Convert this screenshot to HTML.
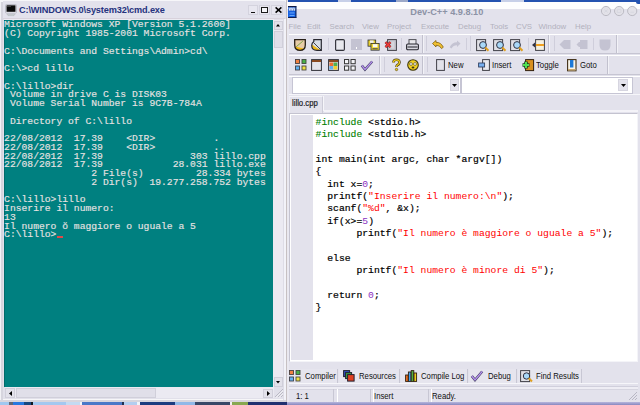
<!DOCTYPE html>
<html><head><meta charset="utf-8">
<style>
*{margin:0;padding:0;box-sizing:border-box}
html,body{width:640px;height:405px;overflow:hidden;background:#e3e2ec;position:relative;font-family:"Liberation Sans",sans-serif}
.a{position:absolute}
svg{position:absolute;overflow:visible}
/* cmd window */
pre.t{position:absolute;left:4.1px;top:21.4px;font-family:"Liberation Mono",monospace;font-size:9.7px;line-height:8.75px;color:#e6e2e2;white-space:pre;font-weight:normal;-webkit-text-stroke:0.15px #e6e2e2}
pre.code{position:absolute;left:315.6px;top:116.7px;font-family:"Liberation Mono",monospace;font-size:9.72px;line-height:12.37px;color:#000;white-space:pre;-webkit-text-stroke:0.2px #000}
.g{color:#008000;-webkit-text-stroke:0.1px #008000}.r{color:#ff0000;-webkit-text-stroke:0}.p{color:#8a30c0;-webkit-text-stroke:0}pre.code b{font-weight:normal}
.menu span{position:absolute;top:21.5px;font-size:7.8px;color:#b2b1bd}
.ui{position:absolute;font-size:8.6px;color:#101010;white-space:nowrap;transform:scaleX(.9);transform-origin:0 0}
.vl{position:absolute;width:1px;background:#a9a8b8}
.hl{position:absolute;height:1px;background:#fff}
</style></head><body>
<!-- ============ CMD WINDOW ============ -->
<div class="a" style="left:0;top:0;width:287px;height:402px;background:#e1e0ea"></div>
<div class="a" style="left:0;top:0;width:1px;height:402px;background:#f2f2f6"></div>
<div class="a" style="left:1px;top:0;width:2px;height:402px;background:#d6d5de"></div>
<div class="a" style="left:0;top:0;width:287px;height:2px;background:#f6f6f9"></div>
<!-- title bar -->
<div class="a" style="left:3px;top:1px;width:282px;height:18px;background:#e3e2ec"></div>
<svg style="left:5px;top:4px" width="12" height="12" viewBox="0 0 12 12">
 <rect x="0.5" y="0.5" width="11" height="8.6" rx="1" fill="#f2f2f6" stroke="#b0b0bc" stroke-width="0.8"/>
 <rect x="1.5" y="1.3" width="9" height="6.5" fill="#0a0a0a"/>
 <rect x="2" y="1.8" width="4" height="1.2" fill="#404040"/>
 <path d="M2 10.4 H10 L9 11.6 H3Z" fill="#e8eaee" stroke="#a8b0b0" stroke-width="0.6"/>
</svg>
<div class="a" style="left:19px;top:5px;font-size:9.2px;font-weight:bold;color:#26337e;letter-spacing:-0.15px">C:\WINDOWS.0\system32\cmd.exe</div>
<!-- min/max/close -->
<div class="a" style="left:248px;top:5px;width:10px;height:10px;background:#e8e7f0;border:1px solid #d4d3de"></div>
<div class="a" style="left:250.5px;top:11.7px;width:4.5px;height:1.6px;background:#111"></div>
<div class="a" style="left:259px;top:5px;width:11px;height:10px;background:#e8e7f0;border:1px solid #d4d3de"></div>
<div class="a" style="left:260.5px;top:6.8px;width:7.5px;height:6.3px;border:1px solid #1a1a1a;border-top-width:1.6px;background:#f4f4f8"></div>
<div class="a" style="left:271px;top:5px;width:12px;height:10px;background:#e8e7f0;border:1px solid #d4d3de"></div>
<svg style="left:274.5px;top:7px" width="7" height="6" viewBox="0 0 7 6"><path d="M0.6 0.4 L6.4 5.6 M6.4 0.4 L0.6 5.6" stroke="#000" stroke-width="1.5"/></svg>
<div class="a" style="left:3px;top:18px;width:282px;height:1px;background:#d8d2dc"></div>
<!-- terminal -->
<div class="a" style="left:4px;top:19px;width:270px;height:1px;background:#ecebf2"></div>
<div class="a" style="left:4px;top:19.5px;width:269px;height:367.5px;background:#008080"></div>
<div class="a" style="left:4px;top:19.5px;width:0.8px;height:367.5px;background:#006a6a"></div>
<pre class="t">Microsoft Windows XP [Version 5.1.2600]
(C) Copyright 1985-2001 Microsoft Corp.

C:\Documents and Settings\Admin>cd\

C:\>cd lillo

C:\lillo>dir
 Volume in drive C is DISK03
 Volume Serial Number is 9C7B-784A

 Directory of C:\lillo

22/08/2012  17.39    &lt;DIR&gt;          .
22/08/2012  17.39    &lt;DIR&gt;          ..
22/08/2012  17.39               303 lillo.cpp
22/08/2012  17.39            28.031 lillo.exe
               2 File(s)         28.334 bytes
               2 Dir(s)  19.277.258.752 bytes

C:\lillo>lillo
Inserire il numero:
13
Il numero ŏ maggiore o uguale a 5
C:\lillo></pre>
<div class="a" style="left:57px;top:236px;width:6px;height:2px;background:#e04848"></div>
<!-- vertical scrollbar -->
<div class="a" style="left:273px;top:20px;width:11px;height:367px;background:#ebeaf2"></div>
<div class="a" style="left:273.5px;top:20.5px;width:9.5px;height:9.5px;background:#e2e1ea;border:1px solid #d0cfda"></div>
<svg style="left:276.2px;top:23.8px" width="4" height="2.5" viewBox="0 0 4 2.5"><path d="M0 2.5 L2 0 L4 2.5Z" fill="#000"/></svg>
<div class="a" style="left:273.5px;top:31px;width:9.5px;height:17px;background:#e0dfe9;border:1px solid #d0cfda"></div>
<div class="a" style="left:273.5px;top:377px;width:9.5px;height:9.5px;background:#e2e1ea;border:1px solid #d0cfda"></div>
<svg style="left:276.2px;top:381px" width="4" height="2.5" viewBox="0 0 4 2.5"><path d="M0 0 L2 2.5 L4 0Z" fill="#000"/></svg>
<!-- horizontal scrollbar -->
<div class="a" style="left:4.5px;top:387px;width:269px;height:11px;background:#ebeaf2"></div>
<div class="a" style="left:5px;top:388px;width:10px;height:9.5px;background:#e2e1ea;border:1px solid #d0cfda"></div>
<svg style="left:8.5px;top:390.5px" width="3" height="5" viewBox="0 0 3 5"><path d="M3 0 L0 2.5 L3 5Z" fill="#000"/></svg>
<div class="a" style="left:16px;top:388px;width:140px;height:9.5px;background:#e0dfe9;border:1px solid #d0cfda"></div>
<div class="a" style="left:262.5px;top:388.5px;width:10px;height:9.5px;background:#e2e1ea;border:1px solid #d0cfda"></div>
<svg style="left:266.5px;top:391px" width="3" height="5" viewBox="0 0 3 5"><path d="M0 0 L3 2.5 L0 5Z" fill="#000"/></svg>
<svg style="left:274px;top:388px" width="10" height="10" viewBox="0 0 10 10"><path d="M9 1 L1 9 M9 4 L4 9 M9 7 L7 9" stroke="#b4b3c0" stroke-width="0.9"/><path d="M9.8 1.8 L1.8 9.8 M9.8 4.8 L4.8 9.8" stroke="#fff" stroke-width="0.6"/></svg>
<div class="a" style="left:3px;top:398.5px;width:283px;height:1px;background:#f6f6f8"></div>
<div class="a" style="left:0;top:400px;width:287px;height:2px;background:#d8d6de"></div>
<div class="a" style="left:283px;top:19px;width:1px;height:381px;background:#dddce6"></div>
<div class="a" style="left:284px;top:19px;width:2px;height:381px;background:#f2f2f8"></div>
<div class="a" style="left:286px;top:0;width:1px;height:402px;background:#c6c0c2"></div>

<!-- taskbar strip -->
<div class="a" style="left:0px;top:402px;width:9px;height:3px;background:#a0c8f0"></div>
<div class="a" style="left:9px;top:402px;width:4px;height:3px;background:#606878"></div>
<div class="a" style="left:13px;top:402px;width:11px;height:3px;background:#2878e0"></div>
<div class="a" style="left:24px;top:402px;width:7px;height:3px;background:#184880"></div>
<div class="a" style="left:31px;top:402px;width:2px;height:3px;background:#101820"></div>
<div class="a" style="left:33px;top:402px;width:33px;height:3px;background:#a4c8f0"></div>
<div class="a" style="left:66px;top:402px;width:14px;height:3px;background:#c4daf2"></div>
<div class="a" style="left:80px;top:402px;width:2px;height:3px;background:#f0f4fa"></div>
<div class="a" style="left:82px;top:402px;width:40px;height:3px;background:#4a78c8"></div>
<div class="a" style="left:122px;top:402px;width:2px;height:3px;background:#203050"></div>
<div class="a" style="left:124px;top:402px;width:13px;height:3px;background:#b4cef0"></div>
<div class="a" style="left:137px;top:402px;width:3px;height:3px;background:#f0f4fa"></div>
<div class="a" style="left:140px;top:402px;width:35px;height:3px;background:#1c3c80"></div>
<div class="a" style="left:175px;top:402px;width:20px;height:3px;background:#90b8e8"></div>
<div class="a" style="left:195px;top:402px;width:35px;height:3px;background:#384868"></div>
<div class="a" style="left:230px;top:402px;width:2px;height:3px;background:#f0f0f0"></div>
<div class="a" style="left:232px;top:402px;width:16px;height:3px;background:#88a850"></div>
<div class="a" style="left:248px;top:402px;width:39px;height:3px;background:#203070"></div>
<!-- ============ DEV-C++ ============ -->
<div class="a" style="left:287px;top:0;width:353px;height:402px;background:#e3e2ec"></div>
<div class="a" style="left:288px;top:0;width:352px;height:1.5px;background:#2452b0"></div>
<div class="a" style="left:338px;top:0;width:13px;height:1.5px;background:#c8d0e8"></div>
<div class="a" style="left:396px;top:0;width:12px;height:1.5px;background:#9ca8c8"></div>
<div class="a" style="left:501px;top:0;width:23px;height:1.5px;background:#c8d0e8"></div>
<div class="a" style="left:287px;top:1.5px;width:353px;height:7.3px;background:#fdfdfe"></div>
<div class="a" style="left:287px;top:9px;width:2px;height:393px;background:#e9e8f0"></div>
<!-- dev icon -->
<svg style="left:288px;top:6px" width="8.5" height="12" viewBox="0 0 8.5 12">
 <rect x="0" y="0" width="8.2" height="11.6" fill="#1660e0"/>
 <rect x="0" y="0" width="8.2" height="1.2" fill="#101840"/>
 <rect x="0.6" y="1.4" width="7" height="3.4" fill="#6890d0"/>
 <path d="M1 1.8 L1.8 4.4 M2.6 1.8 L1.8 4.4 M3.4 1.8 L4.2 4.4 M5 1.8 L4.2 4.4 M5.8 1.8 L6.6 4.4 M7.4 1.8 L6.6 4.4" stroke="#f0f4ff" stroke-width="0.7"/>
 <rect x="1.5" y="6.5" width="5" height="0.9" fill="#70b0ff"/>
 <rect x="1.5" y="9" width="5" height="0.9" fill="#70b0ff"/>
 <rect x="7.4" y="0" width="1" height="11.8" fill="#102050"/>
 <rect x="0" y="11" width="8.4" height="1" fill="#102050"/>
</svg>
<div class="a" style="left:410.3px;top:7px;font-size:9.2px;font-weight:bold;color:#8c92a6">Dev-C++ 4.9.8.10</div>
<!-- title buttons -->
<svg style="left:600px;top:6px" width="40" height="12" viewBox="0 0 40 12">
 <g fill="#e2e1e8" stroke="#bcbbc4" stroke-width="1">
 <circle cx="6" cy="5" r="4.6"/><circle cx="19.1" cy="5" r="4.6"/><circle cx="32.2" cy="5" r="4.6"/></g>
 <g fill="none" stroke="#d6d5de" stroke-width="0.8">
 <path d="M4.3 3.5 L7.7 6.5 M7.7 3.5 L4.3 6.5"/><path d="M17.3 3.5 H20.9 V6.5 H17.3Z"/><path d="M30.4 6.3 H34"/></g>
</svg>
<div class="a" style="left:636px;top:1.5px;width:4px;height:2px;background:#2452b0;border-bottom-left-radius:4px"></div>
<!-- menu -->
<div class="menu">
<span style="left:288.5px">File</span><span style="left:307px">Edit</span><span style="left:329.5px">Search</span><span style="left:362px">View</span><span style="left:387px">Project</span><span style="left:421px">Execute</span><span style="left:458px">Debug</span><span style="left:490px">Tools</span><span style="left:516px">CVS</span><span style="left:538.5px">Window</span><span style="left:575px">Help</span>
</div>

<!-- toolbars: rebar rows -->
<div class="hl" style="left:289px;top:34px;width:351px"></div>
<div class="a" style="left:289px;top:52.5px;width:351px;height:1px;background:#c6c5d2"></div>
<div class="hl" style="left:289px;top:54.5px;width:351px"></div>
<div class="a" style="left:289px;top:73.5px;width:351px;height:1px;background:#c6c5d2"></div>
<div class="hl" style="left:289px;top:75.5px;width:351px"></div>
<!-- toolbar boundaries row1 -->
<div class="vl" style="left:421.5px;top:35px;height:17.5px;background:#c2c1ce"></div>
<div class="vl" style="left:422.5px;top:35px;height:17.5px;background:#f2f2f7"></div>
<div class="vl" style="left:426px;top:36px;height:15px;background:#cfcedb"></div>
<div class="vl" style="left:548px;top:35px;height:17.5px;background:#c2c1ce"></div>
<div class="vl" style="left:549px;top:35px;height:17.5px;background:#f2f2f7"></div>
<div class="vl" style="left:553.5px;top:36px;height:15px;background:#cfcedb"></div>
<div class="vl" style="left:615.5px;top:35px;height:17.5px;background:#c2c1ce"></div>
<div class="vl" style="left:616.5px;top:35px;height:17.5px;background:#f2f2f7"></div>
<!-- separators row1 -->
<div class="vl" style="left:327.5px;top:38px;height:12px;background:#cfcedb"></div>
<div class="vl" style="left:400.5px;top:38px;height:12px;background:#cfcedb"></div>
<div class="vl" style="left:466px;top:38px;height:12px;background:#cfcedb"></div>
<div class="vl" style="left:469.5px;top:36px;height:15px;background:#cfcedb"></div>
<div class="vl" style="left:528px;top:38px;height:12px;background:#cfcedb"></div>
<div class="vl" style="left:593px;top:38px;height:12px;background:#cfcedb"></div>
<!-- row2 boundaries -->
<div class="vl" style="left:379px;top:56px;height:17.5px;background:#c2c1ce"></div>
<div class="vl" style="left:380px;top:56px;height:17.5px;background:#f2f2f7"></div>
<div class="vl" style="left:384px;top:57px;height:15px;background:#cfcedb"></div>
<div class="vl" style="left:421.7px;top:56px;height:17.5px;background:#c2c1ce"></div>
<div class="vl" style="left:422.7px;top:56px;height:17.5px;background:#f2f2f7"></div>
<div class="vl" style="left:426.7px;top:57px;height:15px;background:#cfcedb"></div>
<div class="vl" style="left:607px;top:56px;height:17.5px;background:#c2c1ce"></div>
<div class="vl" style="left:608px;top:56px;height:17.5px;background:#f2f2f7"></div>

<!-- row1 icons -->
<svg style="left:294px;top:38.5px" width="12" height="12" viewBox="0 0 12 12">
 <path d="M0.7 0.7 H11.3 V6 Q11.3 11.3 6 11.3 Q0.7 11.3 0.7 6Z" fill="#e8cca8"/>
 <path d="M1.2 6.5 L6 11 Q2 11 1.2 8Z" fill="#f0a0a0"/>
 <path d="M1.2 7.5 Q1.5 11.2 6 11.2 Q8.5 11 9.5 9.5 Z" fill="#f0b818"/>
 <path d="M2.2 7.8 L8.8 2.2" stroke="#70a040" stroke-width="0.9"/>
 <path d="M0.7 0.7 H11.3 V6 Q11.3 11.3 6 11.3 Q0.7 11.3 0.7 6Z" fill="none" stroke="#282018" stroke-width="1.3"/>
</svg>
<svg style="left:310.5px;top:38.5px" width="11" height="12" viewBox="0 0 11 12">
 <path d="M2.8 0.7 H10.3 V11.3 H6 Q0.7 11.3 0.7 6.5 Q0.7 4 2.8 2.5Z" fill="#d8dde6"/>
 <path d="M0.9 5.5 Q0.7 11.2 6 11.2 L9.5 11.2 Z" fill="#f0b818"/>
 <path d="M2.5 3.5 L10 11" stroke="#303038" stroke-width="0.9"/>
 <path d="M2.8 0.7 H10.3 V11.3 H6 Q0.7 11.3 0.7 6.5 Q0.7 4 2.8 2.5Z" fill="none" stroke="#282830" stroke-width="1.2"/>
</svg>
<svg style="left:334.5px;top:38.5px" width="10" height="12" viewBox="0 0 10 12">
 <rect x="0.6" y="0.6" width="8.8" height="10.8" rx="1.2" fill="#dcdce4" stroke="#303038" stroke-width="1.1"/>
 <rect x="2" y="2" width="6" height="8" fill="#e8e8ee"/>
</svg>
<div class="a" style="left:350.5px;top:38.5px;width:11.5px;height:11.5px;background:#c4c3d2"></div>
<div class="a" style="left:355.5px;top:47px;width:1.5px;height:1.5px;background:#fff"></div>
<svg style="left:366.5px;top:38.5px" width="13" height="12" viewBox="0 0 13 12">
 <rect x="0.6" y="0.6" width="8.5" height="7" fill="#303030"/>
 <rect x="1.4" y="1.4" width="6.9" height="5.4" fill="#e8d030"/>
 <rect x="3" y="1.4" width="3.6" height="2.5" fill="#f0f0f0"/>
 <rect x="3.6" y="4" width="9" height="7.6" fill="#303030"/>
 <rect x="4.4" y="4.8" width="7.4" height="6" fill="#f0d830"/>
 <rect x="6" y="5.2" width="4.4" height="3" fill="#f8f8f8"/>
 <rect x="5.4" y="9.2" width="5.4" height="1.2" fill="#505050"/>
</svg>
<svg style="left:383.5px;top:38.5px" width="13" height="12" viewBox="0 0 13 12">
 <rect x="3.6" y="0.6" width="8.8" height="10.8" fill="#c8c8d0" stroke="#404048" stroke-width="1"/>
 <path d="M9 2.5 V9.5 M7 3 V9" stroke="#e8e8ee" stroke-width="0.8"/>
 <path d="M1.5 3.2 L6.5 8.2 M6.5 3.2 L1.5 8.2" stroke="#803030" stroke-width="2.6"/>
 <path d="M1.5 3.2 L6.5 8.2 M6.5 3.2 L1.5 8.2" stroke="#f03838" stroke-width="1.5"/>
</svg>
<svg style="left:405.5px;top:38.5px" width="13" height="12" viewBox="0 0 13 12">
 <rect x="3" y="0.6" width="7" height="5" fill="#e8e8ec" stroke="#505058" stroke-width="1"/>
 <rect x="0.6" y="5" width="11.8" height="5.8" rx="1.2" fill="#d8d8e0" stroke="#282830" stroke-width="1.1"/>
 <rect x="1.5" y="7.4" width="10" height="1.2" fill="#404048"/>
</svg>
<svg style="left:432px;top:40px" width="12" height="10" viewBox="0 0 12 10">
 <path d="M0.5 3.5 L4 0.5 L4 2.3 Q9 2.3 11.3 7.2 L9.5 8.6 Q8 5.2 4 5.2 L4 7Z" fill="#f0c030" stroke="#806010" stroke-width="0.8"/>
</svg>
<svg style="left:449px;top:40px" width="12" height="10" viewBox="0 0 12 10">
 <path d="M11.5 3.5 L8 0.5 L8 2.3 Q3 2.3 0.7 7.2 L2.5 8.6 Q4 5.2 8 5.2 L8 7Z" fill="#c4c3d2"/>
</svg>
<svg style="left:476px;top:38.5px" width="14" height="13" viewBox="0 0 14 13">
 <rect x="0.6" y="0.6" width="9" height="11" fill="#e0e0e6" stroke="#404048" stroke-width="1"/>
 <circle cx="7" cy="6" r="3.4" fill="#a8d8f8" stroke="#303040" stroke-width="1"/>
 <path d="M9.3 8.5 L12.5 11.8" stroke="#e0a020" stroke-width="2"/>
</svg>
<svg style="left:492.5px;top:38.5px" width="14" height="13" viewBox="0 0 14 13">
 <rect x="0.6" y="0.6" width="9" height="11" fill="#e0e0e6" stroke="#404048" stroke-width="1"/>
 <circle cx="7" cy="6" r="3.4" fill="#a8d8f8" stroke="#303040" stroke-width="1"/>
 <path d="M9.3 8.5 L12.5 11.8" stroke="#e0a020" stroke-width="2"/>
</svg>
<svg style="left:509.5px;top:38.5px" width="14" height="13" viewBox="0 0 14 13">
 <rect x="0.6" y="0.6" width="9" height="11" fill="#e0e0e6" stroke="#404048" stroke-width="1"/>
 <circle cx="7" cy="6" r="3.4" fill="#a8d8f8" stroke="#303040" stroke-width="1"/>
 <path d="M9.3 8.5 L12.5 11.8" stroke="#e0a020" stroke-width="2"/>
</svg>
<svg style="left:532px;top:38.5px" width="13" height="12" viewBox="0 0 13 12">
 <rect x="3.6" y="0.6" width="8.8" height="10.8" fill="#f4f0e0" stroke="#404048" stroke-width="1"/>
 <rect x="4" y="5" width="8" height="2" fill="#f0a020"/>
 <path d="M0 6 L3 3.5 L3 8.5Z" fill="#303040"/>
</svg>
<svg style="left:559px;top:39px" width="12" height="11" viewBox="0 0 12 11">
 <path d="M0.5 5.5 L5 1 H11.5 V10 H5Z" fill="#c4c3d2"/>
</svg>
<svg style="left:575.5px;top:39px" width="12" height="11" viewBox="0 0 12 11">
 <path d="M0.5 5.5 L3 3 H4 V1 H11.5 V10 H4 V8 H3Z" fill="#c4c3d2"/>
</svg>
<svg style="left:599px;top:38.5px" width="12" height="12" viewBox="0 0 12 12">
 <path d="M0.5 0.5 H11.5 V6 Q11.5 11.5 6 11.5 Q0.5 11.5 0.5 6Z" fill="#c4c3d2"/>
</svg>

<!-- row2 icons -->
<svg style="left:294.5px;top:59px" width="12" height="12" viewBox="0 0 12 12">
 <rect x="0.5" y="0.5" width="4" height="4" fill="#f08040" stroke="#484040" stroke-width="0.9"/>
 <rect x="7" y="0.5" width="4" height="4" fill="#48b048" stroke="#404840" stroke-width="0.9"/>
 <rect x="0.5" y="7" width="4" height="4" fill="#60b0f0" stroke="#404048" stroke-width="0.9"/>
 <rect x="7" y="7" width="4" height="4" fill="#f0e040" stroke="#484840" stroke-width="0.9"/>
</svg>
<svg style="left:311px;top:59px" width="11" height="12" viewBox="0 0 11 12">
 <rect x="0.6" y="0.6" width="9.8" height="10.8" fill="#e4e4ea" stroke="#303038" stroke-width="1"/>
 <rect x="1" y="1" width="9" height="2" fill="#8a4a20"/>
</svg>
<svg style="left:328px;top:59px" width="11" height="12" viewBox="0 0 11 12">
 <rect x="0.6" y="0.6" width="9.8" height="10.8" fill="#e4e4ea" stroke="#303038" stroke-width="1"/>
 <rect x="1" y="1" width="9" height="2" fill="#8a4a20"/>
 <rect x="1.5" y="3.5" width="3.8" height="3.5" fill="#f07030"/>
 <rect x="5.5" y="3.5" width="3.8" height="3.5" fill="#50b050"/>
 <rect x="1.5" y="7" width="3.8" height="3.5" fill="#60b0f0"/>
 <rect x="5.5" y="7" width="3.8" height="3.5" fill="#f0d030"/>
</svg>
<svg style="left:344px;top:59px" width="12" height="12" viewBox="0 0 12 12">
 <rect x="0.5" y="0.5" width="4.2" height="4.2" fill="#f4f4f8" stroke="#383838" stroke-width="1"/>
 <rect x="7" y="0.5" width="4.2" height="4.2" fill="#f4f4f8" stroke="#383838" stroke-width="1"/>
 <rect x="0.5" y="7" width="4.2" height="4.2" fill="#f4f4f8" stroke="#383838" stroke-width="1"/>
 <rect x="7" y="7" width="4.2" height="4.2" fill="#f4f4f8" stroke="#383838" stroke-width="1"/>
</svg>
<svg style="left:361px;top:59.5px" width="12" height="11" viewBox="0 0 12 11">
 <path d="M0.8 5.5 L4 9.5 L11.2 1.5" fill="none" stroke="#404060" stroke-width="2.6"/>
 <path d="M0.8 5.5 L4 9.5 L11.2 1.5" fill="none" stroke="#b890f0" stroke-width="1.3"/>
</svg>
<svg style="left:391.5px;top:59px" width="9" height="12" viewBox="0 0 9 12">
 <path d="M1.5 3.5 Q1.5 0.8 4.5 0.8 Q7.5 0.8 7.5 3.5 Q7.5 5 5.5 6 Q4.5 6.5 4.5 8" fill="none" stroke="#504010" stroke-width="2.6"/>
 <path d="M1.5 3.5 Q1.5 0.8 4.5 0.8 Q7.5 0.8 7.5 3.5 Q7.5 5 5.5 6 Q4.5 6.5 4.5 8" fill="none" stroke="#f0d020" stroke-width="1.3"/>
 <circle cx="4.5" cy="10.5" r="1.2" fill="#f0d020" stroke="#504010" stroke-width="0.6"/>
</svg>
<svg style="left:407px;top:59px" width="12" height="12" viewBox="0 0 12 12">
 <circle cx="6" cy="6" r="5.3" fill="#f0d020" stroke="#403810" stroke-width="1.1"/>
 <circle cx="4" cy="5" r="1.4" fill="#fff" stroke="#403810" stroke-width="0.6"/>
 <circle cx="8" cy="5" r="1.4" fill="#fff" stroke="#403810" stroke-width="0.6"/>
 <ellipse cx="6" cy="8.5" rx="1.4" ry="1" fill="#403810"/>
</svg>
<!-- row2 buttons -->
<svg style="left:436px;top:58.5px" width="9" height="12" viewBox="0 0 9 12">
 <rect x="0.6" y="0.6" width="7.8" height="10.8" fill="#e2e2ea" stroke="#404048" stroke-width="1"/>
</svg>
<div class="ui" style="left:448px;top:59.8px">New</div>
<svg style="left:478px;top:58.5px" width="12" height="12" viewBox="0 0 12 12">
 <rect x="4.6" y="0.6" width="6.8" height="10.8" fill="#e8e8ee" stroke="#404048" stroke-width="1"/>
 <rect x="0.6" y="4" width="6" height="4" fill="#78b0f0" stroke="#304060" stroke-width="0.9"/>
</svg>
<div class="ui" style="left:492px;top:59.8px">Insert</div>
<svg style="left:521px;top:58.5px" width="14" height="13" viewBox="0 0 14 13">
 <rect x="4.6" y="0.6" width="8" height="11" fill="#d89020" stroke="#302010" stroke-width="1"/>
 <path d="M5 2.5 V9.5 M1.5 6 H8.5" stroke="#204020" stroke-width="3.6"/>
 <path d="M5 3 V9 M2 6 H8" stroke="#50e050" stroke-width="2"/>
</svg>
<div class="ui" style="left:536px;top:59.8px">Toggle</div>
<svg style="left:567px;top:58.5px" width="10" height="13" viewBox="0 0 10 13">
 <rect x="0.6" y="0.6" width="8.4" height="11.2" fill="#f8f4e8" stroke="#403018" stroke-width="1.1"/>
 <rect x="3" y="1" width="3.4" height="7.5" fill="#1a78d8"/>
 <rect x="1" y="10" width="7.6" height="1.5" fill="#c8a870"/>
</svg>
<div class="ui" style="left:580px;top:59.8px">Goto</div>

<!-- combos -->
<div class="a" style="left:291.5px;top:76.5px;width:169px;height:17px;background:#fff;border:1px solid #c6c5d4"></div>
<div class="a" style="left:449.5px;top:79px;width:9px;height:12px;background:#e4e3ec;border:1px solid #d6d5e0"></div>
<svg style="left:452px;top:84px" width="5" height="3" viewBox="0 0 5 3"><path d="M0 0 H5 L2.5 3Z" fill="#000"/></svg>
<div class="a" style="left:461px;top:76.5px;width:171.5px;height:17px;background:#fff;border:1px solid #c6c5d4"></div>
<div class="a" style="left:618px;top:79px;width:10px;height:12px;background:#e4e3ec;border:1px solid #d6d5e0"></div>
<svg style="left:621px;top:84px" width="5" height="3" viewBox="0 0 5 3"><path d="M0 0 H5 L2.5 3Z" fill="#000"/></svg>

<!-- file tab -->
<div class="hl" style="left:289px;top:94px;width:351px;background:#f6f6fa"></div>
<div class="a" style="left:288.5px;top:95.5px;width:34px;height:17.5px;background:#e3e2ec;border-left:1px solid #eeeef4;border-top:1px solid #f4f4f8;border-right:1px solid #cdccd8"></div>
<div class="a" style="left:323px;top:96px;width:1px;height:15px;background:#f6f6fa"></div>
<div class="a" style="left:324px;top:110.3px;width:314px;height:1.3px;background:#f4f3f8"></div>
<div class="ui" style="left:292px;top:97.6px;color:#202024;-webkit-text-stroke:0.2px #202024">lillo.cpp</div>

<!-- editor -->
<div class="a" style="left:289px;top:113px;width:349px;height:249px;background:#fff;border-top:1px solid #c4c3d0;border-left:1px solid #c4c3d0;border-right:1px solid #f4f4f8;border-bottom:1px solid #f4f4f8"></div>
<div class="a" style="left:291px;top:115px;width:22px;height:245px;background:#e3e2ec"></div>
<pre class="code"><span class="g">#include</span> &lt;stdio.h&gt;
<span class="g">#include</span> &lt;stdlib.h&gt;

<b>int</b> main(<b>int</b> argc, <b>char</b> *argv[])
{
  <b>int</b> x=<span class="p">0</span>;
  printf(<span class="r">"Inserire il numero:\n"</span>);
  scanf(<span class="r">"%d"</span>, &amp;x);
  <b>if</b>(x&gt;=<span class="p">5</span>)
       printf(<span class="r">"Il numero è maggiore o uguale a 5"</span>);

  <b>else</b>
       printf(<span class="r">"Il numero è minore di 5"</span>);

  <b>return</b> <span class="p">0</span>;
}</pre>

<!-- bottom tabs -->
<div class="a" style="left:289px;top:369px;width:49px;height:14px;background:#e6e5ee;border-right:1px solid #c8c7d4"></div>
<svg style="left:289px;top:370px" width="12" height="12" viewBox="0 0 12 12">
 <rect x="0.5" y="0.5" width="4" height="4" fill="#f08040" stroke="#484040" stroke-width="0.9"/>
 <rect x="7" y="0.5" width="4" height="4" fill="#48b048" stroke="#404840" stroke-width="0.9"/>
 <rect x="0.5" y="7" width="4" height="4" fill="#60b0f0" stroke="#404048" stroke-width="0.9"/>
 <rect x="7" y="7" width="4" height="4" fill="#f0e040" stroke="#484840" stroke-width="0.9"/>
</svg>
<div class="ui" style="left:305px;top:371.2px">Compiler</div>
<div class="a" style="left:339px;top:369px;width:61px;height:14px;background:#e6e5ee;border-right:1px solid #c8c7d4"></div>
<svg style="left:343px;top:370px" width="12" height="12" viewBox="0 0 12 12">
 <rect x="0.6" y="0.6" width="6" height="6" fill="#3050c0" stroke="#202030" stroke-width="1"/>
 <rect x="2.6" y="2.6" width="6" height="6" fill="#40a040" stroke="#202030" stroke-width="1"/>
 <rect x="4.6" y="4.6" width="6.5" height="6.5" fill="#e04020" stroke="#202030" stroke-width="1"/>
</svg>
<div class="ui" style="left:359px;top:371.2px">Resources</div>
<div class="a" style="left:401px;top:369px;width:67px;height:14px;background:#e6e5ee;border-right:1px solid #c8c7d4"></div>
<svg style="left:405px;top:370px" width="12" height="12" viewBox="0 0 12 12">
 <rect x="0.6" y="5" width="2.6" height="6.4" fill="#f07020" stroke="#302010" stroke-width="0.9"/>
 <rect x="3.4" y="2" width="2.6" height="9.4" fill="#40a0f0" stroke="#302010" stroke-width="0.9"/>
 <rect x="6.2" y="0.6" width="2.6" height="10.8" fill="#50b040" stroke="#302010" stroke-width="0.9"/>
 <rect x="9" y="3" width="2.6" height="8.4" fill="#f0d020" stroke="#302010" stroke-width="0.9"/>
</svg>
<div class="ui" style="left:421px;top:371.2px">Compile Log</div>
<div class="a" style="left:469px;top:369px;width:48px;height:14px;background:#e6e5ee;border-right:1px solid #c8c7d4"></div>
<svg style="left:471px;top:370px" width="12" height="12" viewBox="0 0 12 12">
 <path d="M0.8 6 L4 10 L11.2 1.5" fill="none" stroke="#404060" stroke-width="2.6"/>
 <path d="M0.8 6 L4 10 L11.2 1.5" fill="none" stroke="#b890f0" stroke-width="1.3"/>
</svg>
<div class="ui" style="left:488px;top:371.2px">Debug</div>
<div class="a" style="left:518px;top:369px;width:64px;height:14px;background:#e6e5ee;border-right:1px solid #c8c7d4"></div>
<svg style="left:520px;top:369.5px" width="14" height="13" viewBox="0 0 14 13">
 <rect x="0.6" y="0.6" width="9" height="11" fill="#e0e0e6" stroke="#404048" stroke-width="1"/>
 <circle cx="6.5" cy="6" r="3.2" fill="#a8d8f8" stroke="#303040" stroke-width="1"/>
 <path d="M8.8 8.3 L12 11.5" stroke="#e0a020" stroke-width="2"/>
</svg>
<div class="ui" style="left:536px;top:371.2px">Find Results</div>

<!-- status bar -->
<div class="hl" style="left:289px;top:382.5px;width:349px;background:#f6f6fa"></div>
<div class="a" style="left:289px;top:386px;width:349px;height:1px;background:#d0cfdc"></div>
<div class="a" style="left:289px;top:387px;width:349px;height:1.5px;background:#eeedf4"></div>
<div class="a" style="left:289px;top:389px;width:349px;height:1px;background:#d6d5e0"></div>
<div class="a" style="left:289px;top:389px;width:44.5px;height:13px;border-right:1px solid #c8c7d4"></div>
<div class="a" style="left:336.5px;top:389px;width:34px;height:13px;border-left:1px solid #fff;border-right:1px solid #c8c7d4"></div>
<div class="a" style="left:372.5px;top:389px;width:56px;height:13px;border-left:1px solid #fff;border-right:1px solid #c8c7d4"></div>
<div class="a" style="left:430.5px;top:389px;width:1px;height:13px;background:#fff"></div>
<div class="ui" style="left:296px;top:390.8px">1: 1</div>
<div class="ui" style="left:374px;top:390.8px">Insert</div>
<div class="ui" style="left:432px;top:390.8px">Ready.</div>
<svg style="left:628px;top:391px" width="10" height="10" viewBox="0 0 10 10"><path d="M9 1 L1 9 M9 4 L4 9 M9 7 L7 9" stroke="#b8b7c4" stroke-width="1"/></svg>
<div class="a" style="left:287px;top:402px;width:353px;height:3px;background:linear-gradient(#b6b6dc,#8888c0)"></div>
</body></html>
